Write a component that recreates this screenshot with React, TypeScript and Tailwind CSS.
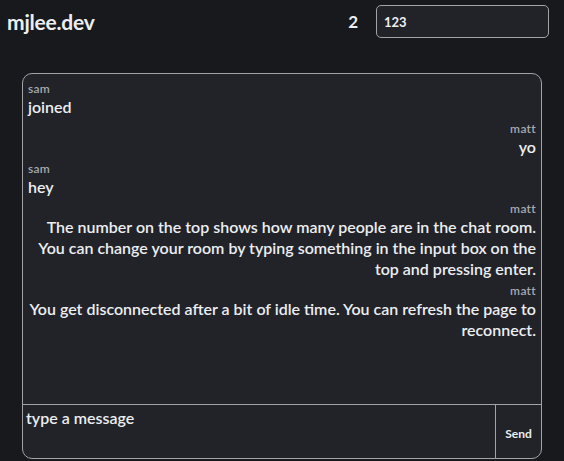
import { useState } from 'react'

interface Message {
  user: string
  text: string
  mine: boolean
}

const messages: Message[] = [
  { user: 'sam', text: 'joined', mine: false },
  { user: 'matt', text: 'yo', mine: true },
  { user: 'sam', text: 'hey', mine: false },
  {
    user: 'matt',
    text: 'The number on the top shows how many people are in the chat room. You can change your room by typing something in the input box on the top and pressing enter.',
    mine: true,
  },
  {
    user: 'matt',
    text: 'You get disconnected after a bit of idle time. You can refresh the page to reconnect.',
    mine: true,
  },
]

export default function App() {
  const [room, setRoom] = useState('123')
  const [draft, setDraft] = useState('')

  return (
    <div
      className="w-[564px] h-[461px] bg-[#18191c] text-[#eceef2] flex flex-col overflow-hidden"
      style={{ fontFamily: 'Lato, "Open Sans", sans-serif' }}
    >
      {/* Header */}
      <div className="flex items-center h-[42px] pl-[7px] pr-[15px] pt-[1px]">
        <h1 className="text-[21px] font-bold tracking-[-0.2px] flex-1">mjlee.dev</h1>
        <span className="text-[17px] font-bold mr-[18px]">2</span>
        <input
          value={room}
          onChange={(e) => setRoom(e.target.value)}
          className="w-[173px] h-[33px] rounded-[5px] border border-[#a3a3a6] bg-[#212328] px-[7px] text-[13px] font-bold text-[#eceef2] outline-none"
        />
      </div>

      {/* Chat box */}
      <div className="mx-[22px] mt-[31px] h-[386px] flex flex-col rounded-[10px] border border-[#a3a3a6] bg-[#212328] overflow-hidden">
        <div className="flex-1 px-[5px] pt-[9px] flex flex-col gap-[6px]">
          {messages.map((m, i) => (
            <div key={i} className={m.mine ? 'text-right' : 'text-left'}>
              <div className="text-[12px] font-semibold leading-[12px] tracking-[0.3px] text-[#a7a9b0]">{m.user}</div>
              <div className="mt-[1px] text-[16px] font-semibold leading-[21px]">{m.text}</div>
            </div>
          ))}
        </div>
        <div className="flex h-[54px] border-t border-[#a3a3a6]">
          <textarea
            value={draft}
            onChange={(e) => setDraft(e.target.value)}
            placeholder="type a message"
            className="flex-1 resize-none bg-transparent px-[3px] pt-[1px] text-[16px] font-semibold text-[#eceef2] placeholder:text-[#eceef2] outline-none"
          />
          <button className="w-[46px] border-l border-[#a3a3a6] flex items-end justify-center pb-[15px] text-[12px] font-bold">
            Send
          </button>
        </div>
      </div>
    </div>
  )
}
